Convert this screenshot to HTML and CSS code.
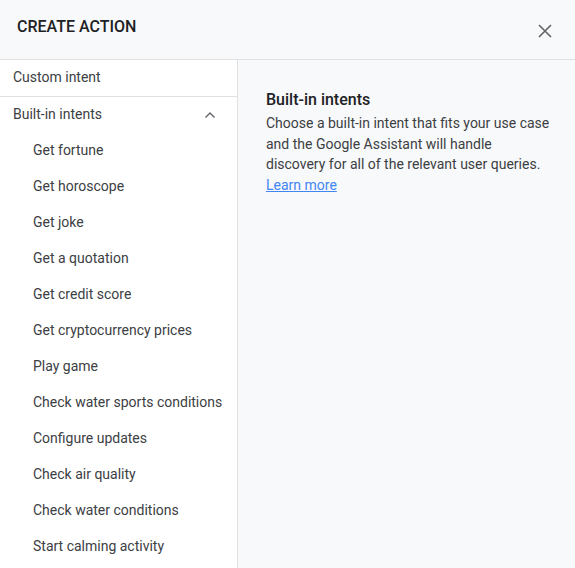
FILE: index.html
```html
<!DOCTYPE html>
<html>
<head>
<meta charset="utf-8">
<link rel="stylesheet" href="styles.css">
</head>
<body>
<div class="dialog">
  <header class="header">
    <h1 class="title">CREATE ACTION</h1>
    <button class="close" aria-label="Close">
      <svg width="14" height="14" viewBox="0 0 14 14"><path d="M1 1L13 13M13 1L1 13" stroke="#5f6368" stroke-width="1.6" fill="none"/></svg>
    </button>
  </header>
  <div class="body">
    <nav class="side">
      <div class="row top">Custom intent</div>
      <div class="row group">
        <span>Built-in intents</span>
        <svg class="chev" width="12" height="8" viewBox="0 0 12 8"><path d="M1.5 6.5L6 2L10.5 6.5" stroke="#5f6368" stroke-width="1.4" fill="none"/></svg>
      </div>
      <div class="row sub">Get fortune</div>
      <div class="row sub">Get horoscope</div>
      <div class="row sub">Get joke</div>
      <div class="row sub">Get a quotation</div>
      <div class="row sub">Get credit score</div>
      <div class="row sub">Get cryptocurrency prices</div>
      <div class="row sub">Play game</div>
      <div class="row sub">Check water sports conditions</div>
      <div class="row sub">Configure updates</div>
      <div class="row sub">Check air quality</div>
      <div class="row sub">Check water conditions</div>
      <div class="row sub">Start calming activity</div>
    </nav>
    <main class="detail">
      <h2 class="dtitle">Built-in intents</h2>
      <p class="dtext">Choose a built-in intent that fits your use case<br>and the Google Assistant will handle<br>discovery for all of the relevant user queries.<br><a href="#" class="link">Learn more</a></p>
    </main>
  </div>
</div>
</body>
</html>
```

FILE: styles.css
```css
html, body {
  margin: 0;
  padding: 0;
}
body {
  font-family: Roboto, "Liberation Sans", Arial, sans-serif;
  color: #3c4043;
  background: #f8f9fa;
  overflow: hidden;
}
.dialog {
  width: 575px;
  height: 568px;
  display: flex;
  flex-direction: column;
}
.header {
  height: 59px;
  border-bottom: 1px solid #e0e0e0;
  background: #f8f9fa;
  display: flex;
  align-items: flex-start;
  justify-content: space-between;
  box-sizing: content-box;
}
.title {
  margin: 0;
  padding: 17px 0 0 17px;
  font-size: 16px;
  line-height: 20px;
  font-weight: 500;
  color: #202124;
}
.close {
  border: 0;
  background: transparent;
  padding: 0;
  margin: 24px 23px 0 0;
  width: 14px;
  height: 14px;
  display: block;
  cursor: pointer;
}
.close svg { display: block; }
.body {
  flex: 1;
  display: flex;
  min-height: 0;
}
.side {
  width: 237px;
  background: #fff;
  border-right: 1px solid #e0e0e0;
  display: flex;
  flex-direction: column;
}
.row {
  height: 36px;
  box-sizing: border-box;
  padding-bottom: 2px;
  display: flex;
  align-items: center;
  font-size: 14px;
  color: #3c4043;
  padding-left: 13px;
  white-space: nowrap;
  flex-shrink: 0;
}
.top {
  height: 37px;
  border-bottom: 1px solid #e0e0e0;
}
.group {
  justify-content: space-between;
  padding-right: 21px;
}
.chev { display: block; margin-top: 2px; }
.sub {
  padding-left: 33px;
}
.detail {
  flex: 1;
  background: #f8f9fa;
  padding: 30px 8px 0 28px;
}
.dtitle {
  margin: 0;
  font-size: 16px;
  line-height: 20px;
  font-weight: 500;
  color: #202124;
}
.dtext {
  margin: 3px 0 0 0;
  font-size: 14px;
  line-height: 20.6px;
  color: #3c4043;
}
.link {
  color: #4285f4;
  text-decoration: underline;
}
```
